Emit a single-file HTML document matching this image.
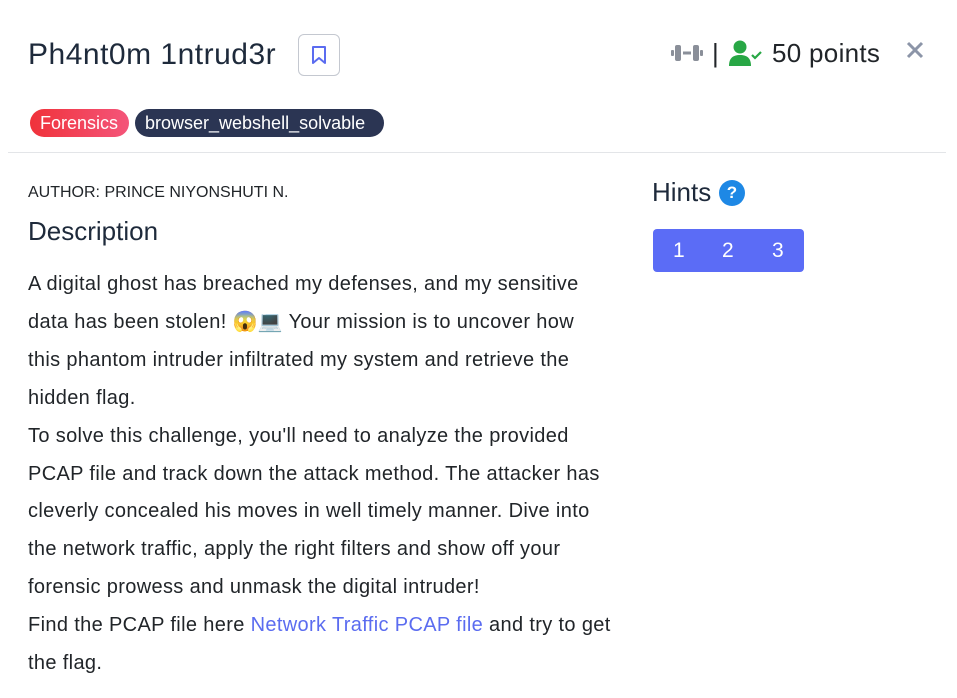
<!DOCTYPE html>
<html><head><meta charset="utf-8"><style>
body{margin:0;width:957px;height:698px;background:#fff;font-family:"Liberation Sans",sans-serif;color:#212529;position:relative;overflow:hidden}
.a{position:absolute}
h1{position:absolute;left:28px;top:35px;margin:0;font-weight:400;font-size:30px;letter-spacing:0.5px;color:#1e2a3b;line-height:40px}
.bm{left:298px;top:34px;width:42px;height:42px;border:1px solid #c4c8d0;border-radius:6px;box-sizing:border-box}
.tag{top:109px;height:28px;border-radius:14px;color:#fff;font-size:18px;line-height:28px;padding:0 10px;box-sizing:border-box;white-space:nowrap}
.p{left:28px;top:266px;width:620px;font-size:20px;letter-spacing:0.35px;line-height:37.9px;color:#212529;white-space:nowrap}
.p a{color:#5b6cf0;text-decoration:none}
</style></head><body>
<h1>Ph4nt0m 1ntrud3r</h1>
<div class="a bm"><svg width="42" height="42" viewBox="0 0 42 42" style="position:absolute;left:-1px;top:-1px"><path d="M15 13h12v16l-6-5-6 5z" fill="none" stroke="#5b6cf0" stroke-width="2" stroke-linejoin="round"/></svg></div>
<div class="a tag" style="left:30px;width:99px;background:linear-gradient(90deg,#f0323a,#f4557a)">Forensics</div>
<div class="a tag" style="left:135px;width:249px;background:#2b3553">browser_webshell_solvable</div>
<svg class="a" style="left:670px;top:42px" width="34" height="22" viewBox="0 0 34 22"><rect x="1" y="8" width="3" height="6" rx="1" fill="#8a8f99"/><rect x="5" y="3" width="6" height="16" rx="2" fill="#8a8f99"/><rect x="13" y="9.5" width="8" height="3" fill="#8a8f99"/><rect x="23" y="3" width="6" height="16" rx="2" fill="#8a8f99"/><rect x="30" y="8" width="3" height="6" rx="1" fill="#8a8f99"/></svg>
<div class="a" style="left:712px;top:38px;font-size:26px;color:#212529">|</div>
<svg class="a" style="left:729px;top:40px" width="34" height="28" viewBox="0 0 34 28"><circle cx="11" cy="7" r="6.5" fill="#28a745"/><path d="M0 26c0-8 4-11 11-11s11 3 11 11z" fill="#28a745"/><path d="M23 15l3 3 6-6" fill="none" stroke="#28a745" stroke-width="2.2"/></svg>
<div class="a" style="left:772px;top:38px;font-size:26px;letter-spacing:0.3px;color:#212529">50 points</div>
<svg class="a" style="left:905px;top:40px" width="20" height="20" viewBox="0 0 20 20"><path d="M3 3l14 14M17 3L3 17" stroke="#8c95a8" stroke-width="3"/></svg>
<div class="a" style="left:8px;top:152px;width:938px;height:1px;background:#e3e5e8"></div>
<div class="a" style="left:28px;top:184px;font-size:16px;color:#212529">AUTHOR: PRINCE NIYONSHUTI N.</div>
<div class="a" style="left:28px;top:216px;font-size:26px;color:#1e2a3b">Description</div>
<div class="a p">A digital ghost has breached my defenses, and my sensitive<br>data has been stolen! 😱💻 Your mission is to uncover how<br>this phantom intruder infiltrated my system and retrieve the<br>hidden flag.<br>To solve this challenge, you'll need to analyze the provided<br>PCAP file and track down the attack method. The attacker has<br>cleverly concealed his moves in well timely manner. Dive into<br>the network traffic, apply the right filters and show off your<br>forensic prowess and unmask the digital intruder!<br>Find the PCAP file here <a>Network Traffic PCAP file</a> and try to get<br>the flag.</div>
<div class="a" style="left:652px;top:177px;font-size:26px;color:#1e2a3b">Hints</div>
<div class="a" style="left:719px;top:180px;width:26px;height:26px;border-radius:50%;background:#1e88e5;color:#fff;font-weight:bold;font-size:17px;text-align:center;line-height:26px">?</div>
<div class="a" style="left:653px;top:229px;width:151px;height:43px;border-radius:4px;background:#5b6cf6;color:#fff;font-size:21px;line-height:43px">
<span class="a" style="left:20px">1</span><span class="a" style="left:69px">2</span><span class="a" style="left:119px">3</span></div>
</body></html>
